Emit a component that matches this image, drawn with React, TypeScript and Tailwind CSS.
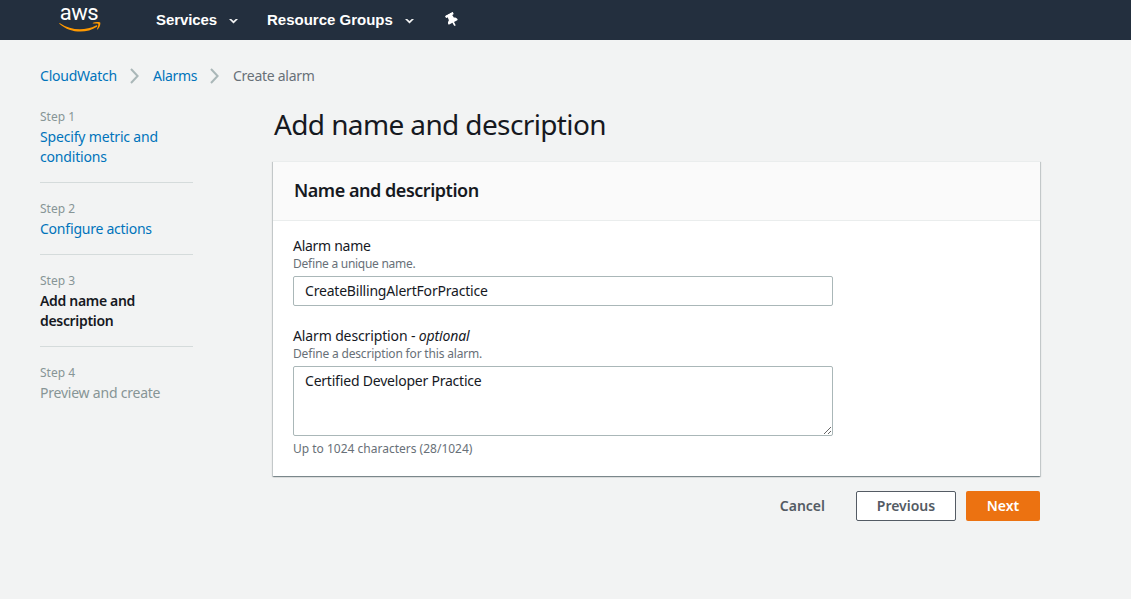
import React from "react";
import { FaThumbtack } from "react-icons/fa";

const steps = [
  { n: 1, lines: ["Specify metric and", "conditions"], style: "text-[#0073bb] tracking-[-0.17px]" },
  { n: 2, lines: ["Configure actions"], style: "text-[#0073bb] tracking-[-0.25px]" },
  { n: 3, lines: ["Add name and", "description"], style: "font-semibold text-[#16191f] tracking-[-0.32px]" },
  { n: 4, lines: ["Preview and create"], style: "text-[#879596] tracking-[-0.22px]" },
];

function Caret() {
  return (
    <svg width="9" height="6" viewBox="0 0 9 6">
      <path d="M0 1H2.2L4.5 3L6.8 1H9L4.5 5.6Z" fill="#f2f3f3" />
    </svg>
  );
}

function Crumb() {
  return (
    <svg width="9" height="16" viewBox="0 0 9 16" fill="none">
      <path d="M1 1L7.6 8L1 15" stroke="#aab7b8" strokeWidth="2" />
    </svg>
  );
}

function Logo() {
  return (
    <div className="flex w-[42px] flex-col items-center self-start pt-0.5">
      <span className="mr-0.5 font-['Roboto',sans-serif] text-[22px] leading-[22px] font-normal tracking-[-0.5px] text-white">aws</span>
      <svg className="-mt-0.5" width="42" height="11" viewBox="0 0 42 11">
        <path d="M1 1.2C12 8.8 26 9 37 3.5C38 3 38.8 4 38 4.7C27 12 11 11 .6 1.9C0 1.3.4.8 1 1.2Z" fill="#ff9900" />
        <path d="M34 .8C36.5-.3 40.5-.2 41.2.6C41.8 2 40.5 6 38.5 7.5C38 7.8 37.8 7.5 38 7C39 4.5 39.6 2.4 39.2 1.9C38.5 1.3 36 1.4 34.3 1.6C33.7 1.6 33.5 1.1 34 .8Z" fill="#ff9900" />
      </svg>
    </div>
  );
}

export default function App() {
  return (
    <div className="h-[599px] w-[1131px] overflow-hidden bg-[#f2f3f3] font-['Noto_Sans',sans-serif] text-[14px] leading-5 text-[#16191f] [font-feature-settings:'liga'_1]">
      <header className="flex h-10 items-center bg-[#232f3e] pl-[59px] font-['Liberation_Sans',sans-serif] text-[15px] font-bold text-white">
        <Logo />
        <span className="ml-[55px] w-[61px] tracking-[-0.1px]">Services</span>
        <span className="ml-3 pt-0.5"><Caret /></span>
        <span className="ml-[29px] w-[127px] whitespace-nowrap">Resource Groups</span>
        <span className="ml-[11px] pt-0.5"><Caret /></span>
        <FaThumbtack className="ml-8 h-[14px] w-[12px] -rotate-[28deg]" />
      </header>
      <nav className="mt-[26px] flex h-5 items-center pl-10 tracking-[-0.22px]">
        <span className="w-[77px] whitespace-nowrap text-[#0073bb]">CloudWatch</span>
        <span className="ml-[13px]"><Crumb /></span>
        <span className="ml-[14px] w-11 whitespace-nowrap text-[#0073bb] tracking-[-0.3px]">Alarms</span>
        <span className="ml-[13px]"><Crumb /></span>
        <span className="ml-[14px] text-[#687078] tracking-[-0.28px]">Create alarm</span>
      </nav>
      <div className="flex">
        <aside className="ml-10 w-[153px] pt-[21px]">
          {steps.map((s) => (
            <div key={s.n} className="mb-4 border-b border-[#d5dbdb] pb-[15px] last:border-0">
              <div className="text-[12px] leading-5 text-[#879596]">Step {s.n}</div>
              {s.lines.map((l) => (
                <div key={l} className={s.style}>{l}</div>
              ))}
            </div>
          ))}
        </aside>
        <main className="ml-20 w-[767px] pt-[21px]">
          <h1 className="h-9 pl-px text-[28px] leading-[34px] tracking-[-0.62px]">Add name and description</h1>
          <section className="mt-[18px] h-[315px] border-t border-[#eaeded] bg-white shadow-[0_1px_1px_0_rgba(0,28,36,0.3),1px_1px_1px_0_rgba(0,28,36,0.15),-1px_1px_1px_0_rgba(0,28,36,0.15)]">
            <h2 className="h-[59px] border-b border-[#eaeded] bg-[#fafafa] px-[21px] text-[18px] leading-[57px] font-semibold tracking-[-0.47px]">Name and description</h2>
            <div className="px-5 pt-[15px]">
              <div className="tracking-[-0.28px]">Alarm name</div>
              <div className="text-[12px] leading-4 tracking-[-0.27px] text-[#687078]">Define a unique name.</div>
              <input className="mt-1 block h-[30px] w-[540px] rounded-[2px] border border-[#aab7b8] bg-white px-[11px] pb-0.5 tracking-[-0.2px]" defaultValue="CreateBillingAlertForPractice" />
              <div className="mt-5 tracking-[-0.13px]">Alarm description - <i>optional</i></div>
              <div className="text-[12px] leading-4 tracking-[-0.18px] text-[#687078]">Define a description for this alarm.</div>
              <textarea className="mt-1 block h-[70px] w-[540px] rounded-[2px] border border-[#aab7b8] bg-white px-[11px] py-1 tracking-[-0.22px]" defaultValue="Certified Developer Practice" />
              <div className="mt-[5px] text-[12px] leading-4 text-[#687078]">Up to 1024 characters (28/1024)</div>
            </div>
          </section>
          <div className="mt-[15px] flex justify-end gap-[10px] font-semibold text-[#545b64]">
            <button className="h-[30px] px-[21px]">Cancel</button>
            <button className="h-[30px] w-[100px] rounded-[2px] border border-[#545b64] bg-white">Previous</button>
            <button className="h-[30px] w-[74px] rounded-[2px] bg-[#ec7211] text-white">Next</button>
          </div>
        </main>
      </div>
    </div>
  );
}
